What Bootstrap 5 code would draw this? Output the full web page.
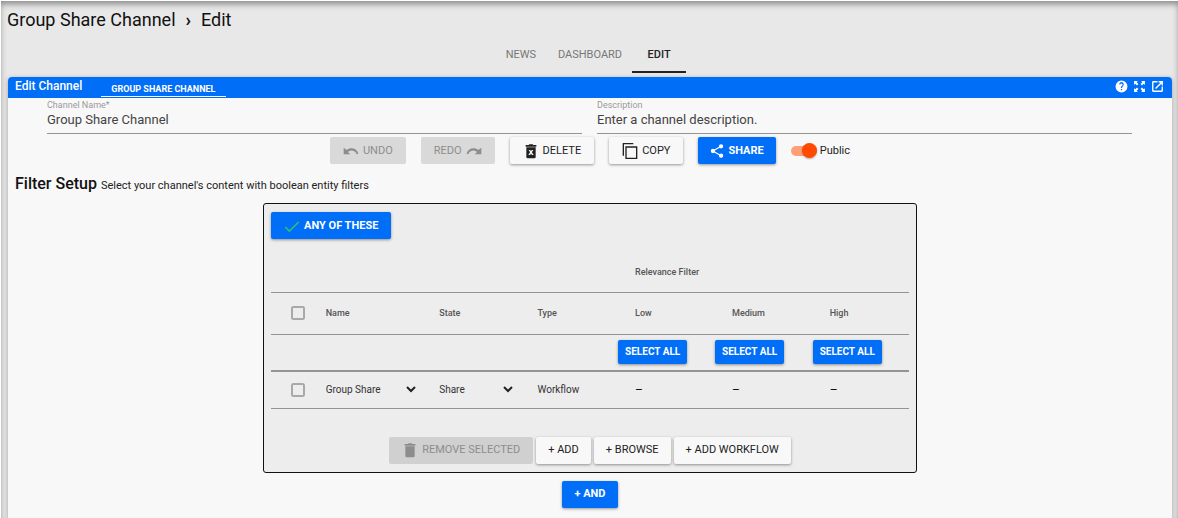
<!DOCTYPE html>
<html lang="en">
<head>
<meta charset="utf-8">
<meta name="viewport" content="width=device-width, initial-scale=1">
<title>Group Share Channel – Edit</title>
<link href="https://cdn.jsdelivr.net/npm/bootstrap@5.3.0/dist/css/bootstrap.min.css" rel="stylesheet">
<style>
body{font-family:Roboto,"Liberation Sans",sans-serif;font-size:12px;line-height:16px;color:#222;background:#fff}
.page-shell{background:#e8e8e8;margin:1px 0 0 1px;min-height:calc(100vh - 1px);box-shadow:inset 0 4px 6px -1px #888;padding:0 6px 0 7px}
.crumbs{font-size:18px;line-height:24px;padding-top:7px;color:#111;gap:10px;margin-left:-1px}
.tabs-bar{padding-top:3px}
.tabs-bar .nav-link{font-size:11px;line-height:16px;color:#777;padding:12px 10px 8px;border-bottom:2px solid transparent;min-width:54px;text-align:center;border-radius:0}
.tabs-bar .nav-link.active{color:#222;font-weight:500;border-color:#222}
.panel-card{background:#f8f8f8;border-radius:4px 4px 0 0;box-shadow:0 1px 4px rgba(0,0,0,.3);margin-top:4px}
.panel-head{background:#006ef7;color:#fff;border-radius:4px 4px 0 0;height:21px;padding:0 8px 0 7px}
.panel-head h2{font-size:12px;line-height:18px;font-weight:500;margin:0}
.sub-tab{font-size:9px;line-height:12px;font-weight:700;color:#fff;text-decoration:none;border-bottom:1px solid #fff;padding:6px 11px 1px 10px;margin-left:19px}
.head-tools{gap:5px;margin-top:3px}
.icon-btn{border:0;background:none;color:#fff;padding:0;width:13px;height:13px;display:flex}
.fields{padding:1px 40px 0 39px;gap:15px}
.field-box{flex:1 1 0;min-width:0}
.field-box label{display:block;font-size:9px;line-height:12px;color:#999}
.field-box input{display:block;width:100%;border:0;border-bottom:1px solid #949494;background:none;font-size:13px;line-height:16px;height:23px;padding:0 0 5px;color:#444;border-radius:0;outline-offset:2px}
.md-btn{--bs-btn-font-size:11px;--bs-btn-line-height:16px;--bs-btn-padding-y:6px;--bs-btn-padding-x:12px;--bs-btn-border-width:0;--bs-btn-border-radius:2px;--bs-btn-bg:#f8f8f8;--bs-btn-color:#222;--bs-btn-hover-bg:#eee;height:27px;display:inline-flex;align-items:center;box-shadow:0 1px 3px rgba(0,0,0,.4);white-space:nowrap}
.md-btn.with-icon{--bs-btn-padding-x:13px;gap:4px}
.md-btn:disabled{--bs-btn-disabled-bg:#d9d9d9;--bs-btn-disabled-color:#8d8d8d;--bs-btn-disabled-opacity:1;box-shadow:none}
.panel-filter .md-btn:disabled{--bs-btn-disabled-bg:#d0d0d0}
.md-btn.btn-main{--bs-btn-bg:#006ef7;--bs-btn-color:#fff;--bs-btn-hover-bg:#005fd6;--bs-btn-hover-color:#fff;font-weight:700}
.md-btn.btn-mini{font-size:10px;height:24px;padding:4px 7px}
.actions{gap:15px;padding-top:3px}
.form-switch.toggle{padding:0;min-height:0;margin:0;display:flex;align-items:center;gap:3px}
.toggle .form-check-input{appearance:none;float:none;margin:0;width:26px;height:10px;border:0;border-radius:5px;background:#bbb;position:relative}
.toggle .form-check-input:checked{background:#ff9f78}
.toggle .form-check-input::after{content:"";position:absolute;top:-3px;left:0;width:15px;height:15px;border-radius:50%;background:#fafafa;box-shadow:0 1px 2px rgba(0,0,0,.3)}
.toggle .form-check-input:checked::after{left:auto;right:0;background:#ff4a00}
.toggle label{font-size:11px;line-height:16px}
.setup-title{font-size:16px;line-height:20px;font-weight:500;margin:0;color:#111}
.setup-line{padding:10px 7px 0}
.setup-hint{font-size:11px;line-height:16px}
.panel-filter{max-width:654px;background:#ededed;border:1px solid #111;border-radius:3px;padding:8px 7px;margin:9px auto 0}
.rules{table-layout:fixed;width:100%;margin:13px 0 28px;font-size:9px;line-height:12px;color:#555;border-collapse:collapse}
.rules th,.rules td{padding:0 0 0 17px;border-bottom:1px solid #949494;vertical-align:middle;font-weight:500}
.rules td{font-size:10px;font-weight:400;color:#333}
.rules thead tr{height:42px}
.rules thead tr:first-child{height:40px}
.rules tbody tr{height:37px}
.rules .heavy th,.rules .heavy td{border-bottom-width:2px;padding-left:0}
.rules .pick{padding-left:20px}
.rules input{display:block;margin:0;width:14px;height:14px;border:2px solid #a9a9a9;border-radius:2px;background-color:transparent}
.rule-select{appearance:none;border:0;width:90px;font-size:10px;line-height:12px;height:20px;color:#333;padding:0 20px 0 0;background:url("data:image/svg+xml,%3Csvg xmlns='http://www.w3.org/2000/svg' viewBox='0 0 10 7'%3E%3Cpath d='M1 1l4 4 4-4' fill='none' stroke='%23222' stroke-width='2'/%3E%3C/svg%3E") right center/10px 7px no-repeat;display:block}
.rule-select.narrow{width:74px}
.rules .dash{color:#111;font-size:12px}
</style>
</head>
<body>
<div class="page-shell d-flex flex-column">
  <nav class="crumbs d-flex" aria-label="Breadcrumb"><span>Group Share Channel</span><span class="fw-bold">›</span><span>Edit</span></nav>
  <ul class="nav tabs-bar justify-content-center">
    <li class="nav-item"><a class="nav-link" href="#">NEWS</a></li>
    <li class="nav-item"><a class="nav-link" href="#">DASHBOARD</a></li>
    <li class="nav-item"><a class="nav-link active" href="#" aria-current="page">EDIT</a></li>
  </ul>
  <main class="panel-card flex-grow-1">
    <header class="panel-head d-flex align-items-start">
      <h2>Edit Channel</h2>
      <a class="sub-tab" href="#">GROUP SHARE CHANNEL</a>
      <div class="d-flex ms-auto head-tools">
        <button class="icon-btn" aria-label="Help"><svg viewBox="0 0 24 24" fill="currentColor"><path d="M12 1a11 11 0 1 0 0 22 11 11 0 0 0 0-22zm1.100 18h-2.200v-2.200h2.200zm2-8.100-.9.900c-.8.800-1.100 1.400-1.100 3h-2.200v-.5c0-1.200.5-2.200 1.200-3l1.300-1.300a2 2 0 1 0-3.400-1.500H7.800a4.200 4.200 0 1 1 7.300 2.400z"/></svg></button>
        <button class="icon-btn" aria-label="Full screen"><svg viewBox="0 0 24 24" fill="currentColor"><path d="M2 2h7L6.800 4.200 10 7.400 7.400 10 4.200 6.800 2 9zM22 2v7l-2.200-2.200-3.200 3.200L14 7.400l3.200-3.200L15 2zM2 22v-7l2.200 2.200L7.400 14l2.600 2.600-3.200 3.200L9 22zM22 22h-7l2.200-2.200-3.200-3.200 2.600-2.600 3.200 3.200L22 15z"/></svg></button>
        <button class="icon-btn" aria-label="Open in new window"><svg viewBox="0 0 24 24" fill="currentColor"><path d="M19.500 19.500h-15v-15H12V2H4a2 2 0 0 0-2 2v16c0 1.100.9 2 2 2h16a2 2 0 0 0 2-2v-8h-2.500zM14 2v2.500h3.700L7.500 14.700l1.800 1.800L19.500 6.300V10H22V2z"/></svg></button>
      </div>
    </header>
    <form onsubmit="return false">
      <div class="fields d-flex">
        <div class="field-box"><label for="cname">Channel Name*</label><input id="cname" type="text" value="Group Share Channel"></div>
        <div class="field-box"><label for="cdesc">Description</label><input id="cdesc" type="text" value="Enter a channel description."></div>
      </div>
      <div class="actions d-flex justify-content-center align-items-center">
        <button type="button" class="btn md-btn with-icon" disabled><svg width="16" height="16" viewBox="0 0 24 24" fill="currentColor"><path d="M12.500 8c-2.650 0-5.050 1-6.900 2.600L1 7v10h10l-3.620-3.620A8 8 0 0 1 20.500 17l2.500-.8A11 11 0 0 0 12.500 8z"/></svg>UNDO</button>
        <button type="button" class="btn md-btn with-icon" disabled>REDO<svg width="16" height="16" viewBox="0 0 24 24" fill="currentColor"><path d="M11.500 8c2.650 0 5.050 1 6.900 2.600L23 7v10H13l3.620-3.620A8 8 0 0 0 3.500 17L1 16.200A11 11 0 0 1 11.500 8z"/></svg></button>
        <button type="button" class="btn md-btn with-icon"><svg width="16" height="16" viewBox="0 0 24 24" fill="currentColor"><path fill-rule="evenodd" d="M5 6.500h14V21a2 2 0 0 1-2 2H7a2 2 0 0 1-2-2zM4 3h4.500l1-1h5l1 1H20v2.500H4zM8.500 10.500l2.200 3.500L8 18h2.600l1.400-2.200 1.400 2.200H16l-2.700-4 2.200-3.500h-2.400L12 12.200l-1.100-1.700z"/></svg>DELETE</button>
        <button type="button" class="btn md-btn with-icon"><svg width="16" height="16" viewBox="0 0 24 24" fill="none" stroke="currentColor" stroke-width="2"><path d="M17 1H2v18M6 6h16v17H6z"/></svg>COPY</button>
        <button type="button" class="btn md-btn btn-main"><svg class="me-1" width="14" height="14" viewBox="0 0 24 24" fill="currentColor" stroke="currentColor" stroke-width="2"><path d="M19 4 5 12l14 8" fill="none"/><circle cx="19" cy="4" r="2.700"/><circle cx="5" cy="12" r="2.700"/><circle cx="19" cy="20" r="2.700"/></svg>SHARE</button>
        <div class="form-check form-switch toggle"><input class="form-check-input" type="checkbox" role="switch" id="pub" checked><label for="pub">Public</label></div>
      </div>
      <div class="setup-line d-flex align-items-baseline gap-1"><h3 class="setup-title">Filter Setup</h3><span class="setup-hint">Select your channel's content with boolean entity filters</span></div>
      <section class="panel-filter">
        <button type="button" class="btn md-btn btn-main with-icon"><svg width="16" height="16" viewBox="0 0 24 24" fill="none" stroke="#2fbf71" stroke-width="2.500"><path d="M2 13.500l6 6L22 6"/></svg>ANY OF THESE</button>
        <table class="rules">
          <colgroup><col style="width:5.900%"><col style="width:17.800%"><col style="width:15.400%"><col style="width:15.300%"><col style="width:15.200%"><col style="width:15.300%"><col style="width:15.100%"></colgroup>
          <thead>
            <tr><th colspan="4"></th><th colspan="3">Relevance Filter</th></tr>
            <tr><th class="pick"><input class="form-check-input" type="checkbox" aria-label="Select all rows"></th><th>Name</th><th>State</th><th>Type</th><th>Low</th><th>Medium</th><th>High</th></tr>
          </thead>
          <tbody>
            <tr class="heavy"><td colspan="4"></td><td><button type="button" class="btn md-btn btn-main btn-mini">SELECT ALL</button></td><td><button type="button" class="btn md-btn btn-main btn-mini">SELECT ALL</button></td><td><button type="button" class="btn md-btn btn-main btn-mini">SELECT ALL</button></td></tr>
            <tr><td class="pick"><input class="form-check-input" type="checkbox" aria-label="Select row"></td><td><select class="rule-select" aria-label="Name"><option>Group Share</option></select></td><td><select class="rule-select narrow" aria-label="State"><option>Share</option></select></td><td>Workflow</td><td class="dash">–</td><td class="dash">–</td><td class="dash">–</td></tr>
          </tbody>
        </table>
        <div class="d-flex justify-content-center" style="gap:3px">
          <button type="button" class="btn md-btn with-icon" disabled><svg width="16" height="16" viewBox="0 0 24 24" fill="currentColor"><path d="M5 6.500h14V21a2 2 0 0 1-2 2H7a2 2 0 0 1-2-2zM4 3h4.500l1-1h5l1 1H20v2.500H4z"/></svg>REMOVE SELECTED</button>
          <button type="button" class="btn md-btn">+ ADD</button>
          <button type="button" class="btn md-btn">+ BROWSE</button>
          <button type="button" class="btn md-btn">+ ADD WORKFLOW</button>
        </div>
      </section>
      <div class="d-flex justify-content-center pt-2 pb-2"><button type="button" class="btn md-btn btn-main">+ AND</button></div>
    </form>
  </main>
</div>
<script src="https://cdn.jsdelivr.net/npm/bootstrap@5.3.0/dist/js/bootstrap.bundle.min.js"></script>
</body>
</html>
